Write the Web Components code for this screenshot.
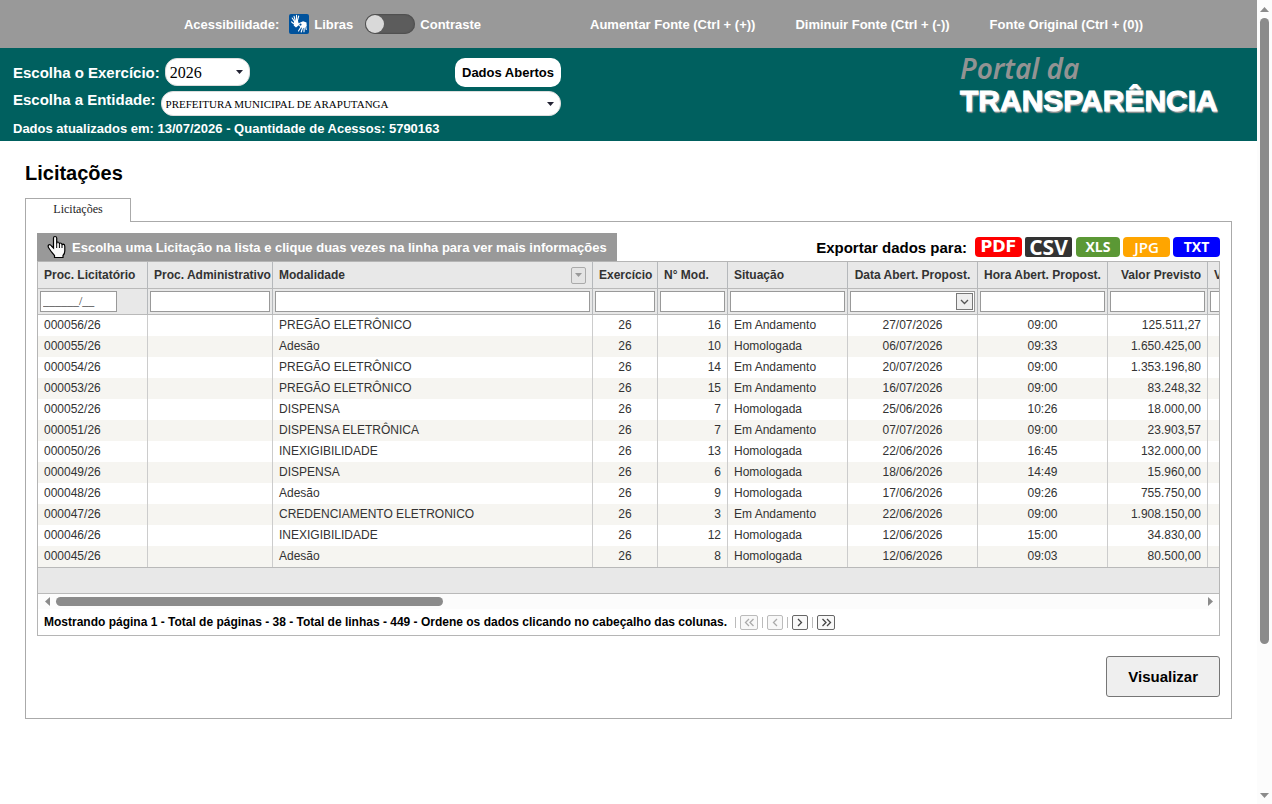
<!DOCTYPE html>
<html lang="pt-BR">
<head>
<meta charset="utf-8">
<title>Portal da Transparência - Licitações</title>
<style>
  body { margin: 0; background: #fff; color: #000; font-family: "Liberation Sans", Arial, sans-serif; font-size: 13px; }
</style>
</head>
<body>
<portal-page>
  <access-bar></access-bar>
  <portal-header></portal-header>
  <tab-panel heading="Licitações" tab="Licitações">
    <grid-toolbar>Escolha uma Licitação na lista e clique duas vezes na linha para ver mais informações</grid-toolbar>
    <data-grid><grid-pager>Mostrando página 1 - Total de páginas - 38 - Total de linhas - 449 - Ordene os dados clicando no cabeçalho das colunas.</grid-pager></data-grid>
    <action-button>Visualizar</action-button>
  </tab-panel>
</portal-page>

<script>
function define(name, html) {
  const template = document.createElement('template');
  template.innerHTML = '<style>:host,*{box-sizing:border-box}button,input,select{font:inherit;color:inherit;margin:0}</style>' + html;
  customElements.define(name, class extends HTMLElement {
    constructor() {
      super();
      this.attachShadow({ mode: 'open' }).append(template.content.cloneNode(true));
    }
    connectedCallback() {
      for (const el of this.shadowRoot.querySelectorAll('[data-attr]')) {
        el.textContent = this.getAttribute(el.dataset.attr);
      }
    }
  });
}

/* Page frame: content next to the vertical scroll bar */
define('portal-page', `
<style>
  :host { display: grid; grid-template-columns: minmax(0, 1fr) 15px; height: 100vh; }
  main { overflow: hidden; }
</style>
<main><slot></slot></main>
<scroll-track style="--thumb:626;--rest:142"></scroll-track>`);

define('scroll-track', `
<style>
  :host { display: flex; flex-direction: column; align-items: center; background: #fcfcfc; }
  :host([horizontal]) { flex-direction: row; height: 15px; }
  .end { flex: 0 0 18px; display: flex; align-items: center; justify-content: center; }
  .thumb { flex: var(--thumb) 1 0; width: 9px; border-radius: 5px; background: #8b8b8b; }
  .rest { flex: var(--rest) 1 0; }
  svg { display: block; fill: #8b8b8b; }
  :host([horizontal]) .thumb { width: auto; height: 9px; }
  :host([horizontal]) svg { transform: rotate(-90deg); }
</style>
<span class="end"><svg width="9" height="5"><path d="M0 5 4.500 0 9 5z"/></svg></span>
<span class="thumb"></span><span class="rest"></span>
<span class="end"><svg width="9" height="5"><path d="M0 0 4.500 5 9 0z"/></svg></span>`);

define('access-bar', `
<style>
  :host { display: flex; align-items: center; justify-content: center; height: 48px; padding-left: 70px; background: #999; color: #fff; font-weight: bold; white-space: nowrap; }
  .left { display: flex; align-items: center; margin-right: 109px; }
  .libras { display: flex; align-items: center; gap: 5px; margin: 0 12px 0 10px; }
  a { color: inherit; text-decoration: none; }
  svg { display: block; }
  label { display: flex; align-items: center; gap: 5px; }
  input { appearance: none; width: 50px; height: 20px; border-radius: 10px; background: #5c5c5c; box-shadow: inset 0 0 2px #333; display: flex; }
  input::before { content: ""; width: 18px; height: 18px; margin: 1px; border-radius: 50%; background: #d9d9d9; }
  nav { display: flex; gap: 40px; }
</style>
<div class="left">
  <span>Acessibilidade:</span>
  <a class="libras" href="#libras">
    <svg width="20" height="20" viewBox="0 0 20 20"><rect width="20" height="20" rx="2" fill="#00529c"/>
      <g stroke="#fff" stroke-linecap="round" fill="none" stroke-width="1.100">
        <path d="M6.200 8.500 3.200 4M6.500 7.500 5 2.200M7.500 7 7.500 1.300M8.300 7 9.700 2M4.500 9.500 2.500 7.800M12.500 12 9.500 17M14 12.500 12.200 18M15.300 12 15 17.700M16.500 11 17.200 15.500"/></g>
      <path d="M5 7.500 8.800 6l.8 3.200 4.500-2 3.400 1.300.2 3.500-2.500 2-3.600-.6-1.800-2.100-2.800 2.200-2.300-2z" fill="#fff"/>
      <circle cx="11.500" cy="10.600" r="1.100" fill="#00529c"/>
    </svg>Libras</a>
  <label><input type="checkbox">Contraste</label>
</div>
<nav><a href="#maior">Aumentar Fonte (Ctrl + (+))</a><a href="#menor">Diminuir Fonte (Ctrl + (-))</a><a href="#original">Fonte Original (Ctrl + (0))</a></nav>`);

define('portal-header', `
<style>
  :host { display: flex; justify-content: space-between; height: 93px; padding: 10px 39px 0 13px; background: #00605f; color: #fff; font-weight: bold; }
  form { width: 548px; }
  .row { display: flex; align-items: center; gap: 5px; }
  .row + .row { margin-top: 4px; align-items: flex-start; }
  label { font-size: 15px; white-space: nowrap; }
  .pick { display: grid; align-items: center; align-self: flex-start; color: #000; font: 16px "Liberation Serif", "Times New Roman", serif; }
  .pick > * { grid-area: 1 / 1; }
  .pick svg { justify-self: end; margin-right: 7px; pointer-events: none; fill: #223; }
  select { appearance: none; width: 100%; border: 1px solid #ddd; background: #fff; border-radius: 12px; padding: 0 20px 0 4px; }
  .year { width: 85px; } .year select { height: 28px; }
  .entity { flex: 1; font-size: 11px; } .entity select { height: 25px; }
  button { margin-left: auto; width: 106px; height: 29px; padding: 0; border: 0; border-radius: 10px; background: #fff; color: #000; }
  p { margin: 5px 0 0; line-height: 15px; white-space: nowrap; }
  .logo { width: 258px; margin-top: -6px; white-space: nowrap; }
  .logo i { display: block; font: italic 600 28px/32px "Noto Sans", sans-serif; color: #939393; }
  .logo b { display: block; font-size: 30px; line-height: 34px; text-shadow: 1px 1px 2px #aaa, 1px 2px 1px #888; -webkit-text-stroke: 1px #fff; }
</style>
<form>
  <div class="row"><label for="year">Escolha o Exercício:</label>
    <span class="pick year"><select id="year"><option>2026</option></select><svg width="7" height="4"><path d="M0 0h7L3.500 4z"/></svg></span>
    <button type="button">Dados Abertos</button></div>
  <div class="row"><label for="entity">Escolha a Entidade:</label>
    <span class="pick entity"><select id="entity"><option>PREFEITURA MUNICIPAL DE ARAPUTANGA</option></select><svg width="7" height="4"><path d="M0 0h7L3.500 4z"/></svg></span></div>
  <p>Dados atualizados em: 13/07/2026 - Quantidade de Acessos: 5790163</p>
</form>
<div class="logo"><i>Portal da</i><b>TRANSPARÊNCIA</b></div>`);

define('tab-panel', `
<style>
  :host { display: block; padding: 20px 25px 0; }
  h1 { margin: 0 0 13px; font-size: 20px; line-height: 24px; }
  .tab { position: relative; display: block; width: 106px; height: 24px; margin-bottom: -1px; padding: 0 0 2px; border: 1px solid #aaa; border-bottom: 0; background: #fff; font: 12px "Liberation Serif", serif; color: #222; }
  section { border: 1px solid #aaa; padding: 11px 11px 21px; }
</style>
<h1 data-attr="heading"></h1>
<button class="tab" role="tab" aria-selected="true" data-attr="tab"></button>
<section><slot></slot></section>`);

define('grid-toolbar', `
<style>
  :host { display: flex; justify-content: space-between; align-items: center; height: 28px; white-space: nowrap; }
  .hint { display: flex; align-items: center; gap: 6px; width: 580px; height: 28px; padding-left: 10px; background: #999; color: #fff; font-weight: bold; }
  .export { display: flex; align-items: center; gap: 3px; }
  .export b { font-size: 15px; margin-right: 5px; }
  button { width: 47px; height: 20px; padding: 0; border: 0; border-radius: 4px; color: #fff; font: bold 14px/20px "Open Sans", sans-serif; }
  .pdf { background: #f00; font: bold 16px/20px "DejaVu Sans", sans-serif; }
  .csv { background: #333; font-size: 21px; border-radius: 2px; margin-right: 1px; }
  .xls { background: #5b9835; width: 44px; }
  .jpg { background: #ffa500; font-size: 15px; font-weight: 600; } .txt { background: #00f; }
</style>
<div class="hint"><svg width="19" height="24" viewBox="0 0 19 24"><path d="M6.500 13V3Q6.500 1.500 8 1.500T9.700 3V8.500Q9.800 7 11 7T12.400 9Q12.500 8 13.700 8T15 10Q15.200 9.200 16.300 9.200 17.800 9.400 17.800 11.500V16Q17.800 18.500 16 20.500V22.500H7.500V20.500L4.500 17 1.800 13Q.6 11.200 1.600 10 3 9 4.500 11z" fill="#fafafa" stroke="#000" stroke-width="1.200"/><path d="M9.700 8v5M12.400 9v4M15 10v3" stroke="#000" fill="none"/></svg><span><slot></slot></span></div>
<div class="export"><b>Exportar dados para:</b><button class="pdf">PDF</button><button class="csv">CSV</button><button class="xls">XLS</button><button class="jpg">JPG</button><button class="txt">TXT</button></div>`);

const columns = [
  ['Proc. Licitatório', 110], ['Proc. Administrativo', 125], ['Modalidade', 320],
  ['Exercício', 65, 'center'], ['N° Mod.', 70, 'right'], ['Situação', 120],
  ['Data Abert. Propost.', 130, 'center'], ['Hora Abert. Propost.', 130, 'center'],
  ['Valor Previsto', 100, 'right'], ['Valor', 130, 'right']
];
const rows = [
  ['000056/26', '', 'PREGÃO ELETRÔNICO', '26', '16', 'Em Andamento', '27/07/2026', '09:00', '125.511,27', ''],
  ['000055/26', '', 'Adesão', '26', '10', 'Homologada', '06/07/2026', '09:33', '1.650.425,00', ''],
  ['000054/26', '', 'PREGÃO ELETRÔNICO', '26', '14', 'Em Andamento', '20/07/2026', '09:00', '1.353.196,80', ''],
  ['000053/26', '', 'PREGÃO ELETRÔNICO', '26', '15', 'Em Andamento', '16/07/2026', '09:00', '83.248,32', ''],
  ['000052/26', '', 'DISPENSA', '26', '7', 'Homologada', '25/06/2026', '10:26', '18.000,00', ''],
  ['000051/26', '', 'DISPENSA ELETRÔNICA', '26', '7', 'Em Andamento', '07/07/2026', '09:00', '23.903,57', ''],
  ['000050/26', '', 'INEXIGIBILIDADE', '26', '13', 'Homologada', '22/06/2026', '16:45', '132.000,00', ''],
  ['000049/26', '', 'DISPENSA', '26', '6', 'Homologada', '18/06/2026', '14:49', '15.960,00', ''],
  ['000048/26', '', 'Adesão', '26', '9', 'Homologada', '17/06/2026', '09:26', '755.750,00', ''],
  ['000047/26', '', 'CREDENCIAMENTO ELETRONICO', '26', '3', 'Em Andamento', '22/06/2026', '09:00', '1.908.150,00', ''],
  ['000046/26', '', 'INEXIGIBILIDADE', '26', '12', 'Homologada', '12/06/2026', '15:00', '34.830,00', ''],
  ['000045/26', '', 'Adesão', '26', '8', 'Homologada', '12/06/2026', '09:03', '80.500,00', '']
];
const headAlign = i => i === 8 ? 'right' : i === 6 || i === 7 ? 'center' : 'left';
const headCells = columns.map(([name], i) =>
  `<th scope="col" class="${headAlign(i)}">${i === 2
    ? `<span class="with-menu">${name}<button aria-label="Filtrar modalidade"><svg width="7" height="4"><path d="M0 0h7L3.500 4z" fill="#999"/></svg></button></span>`
    : name}</th>`).join('');
const filterCells = columns.map(([name], i) =>
  `<td><span class="field"><input aria-label="Filtrar ${name}"${i === 0 ? ' class="mask" value="______/__"' : ''}>${i === 6
    ? '<button aria-label="Abrir calendário"><svg width="9" height="6"><path d="M1 1 4.500 4.500 8 1" fill="none" stroke="#555" stroke-width="1.300"/></svg></button>' : ''}</span></td>`).join('');
const bodyRows = rows.map(r => '<tr>' + r.map((c, i) => `<td class="${columns[i][2] || 'left'}">${c}</td>`).join('') + '</tr>').join('');

define('data-grid', `
<style>
  :host { display: block; border: 1px solid #b5b5b5; font-size: 12px; color: #333; }
  .view { overflow-x: auto; scrollbar-width: none; }
  table { table-layout: fixed; width: 1300px; border-collapse: separate; border-spacing: 0; }
  th, td { padding: 0 6px; border-right: 1px solid #ccc; white-space: nowrap; overflow: hidden; }
  .left { text-align: left; } .center { text-align: center; } .right { text-align: right; }
  thead th, thead td { background: #e8e8e8; border-right-color: #b5b8bb; border-bottom: 1px solid #b9b9b9; }
  thead th { height: 27px; padding-right: 0; }
  thead th.center { padding: 0; } thead th.right { padding-right: 6px; }
  thead td { height: 26px; padding: 0 2px; }
  tbody td { height: 21px; padding-bottom: 2px; }
  tbody tr:nth-child(even) { background: #f6f5f1; }
  .with-menu { display: flex; justify-content: space-between; align-items: center; padding-right: 6px; }
  .with-menu button { width: 15px; height: 17px; padding: 0; border: 1px solid #aaa; border-radius: 2px; background: #e4e4e4; display: grid; place-items: center; }
  .field { display: grid; align-items: center; }
  .field > * { grid-area: 1 / 1; }
  .field input { width: 100%; height: 21px; border: 1px solid #999; padding: 0 2px; background: #fff; font: 12px "Liberation Serif", serif; }
  .field input.mask { width: 77px; }
  .field button { justify-self: end; width: 17px; height: 17px; margin-right: 2px; padding: 0; border: 1px solid #777; background: #eee; display: grid; place-items: center; }
  .foot { height: 27px; background: #e8e8e8; border: solid #b9b9b9; border-width: 1px 0; }
</style>
<div class="view"><table><colgroup>${columns.map(c => `<col style="width:${c[1]}px">`).join('')}</colgroup>
<thead><tr>${headCells}</tr><tr>${filterCells}</tr></thead><tbody>${bodyRows}</tbody></table></div>
<div class="foot"></div>
<scroll-track horizontal style="--thumb:387;--rest:759"></scroll-track>
<slot></slot>`);

define('grid-pager', `
<style>
  :host { display: flex; align-items: center; gap: 4px; height: 26px; padding-left: 6px; color: #000; font-weight: bold; white-space: nowrap; }
  .text { margin-right: 4px; }
  i { width: 1px; height: 11px; background: #bbb; }
  button { width: 16px; height: 15px; padding: 0; border: 1px solid #666; border-radius: 2px; background: #f8f8f8; display: grid; place-items: center; }
  button.wide { width: 18px; }
  button:disabled { border-color: #bbb; }
  svg { fill: none; stroke: #444; stroke-width: 1.300; }
  button:disabled svg { stroke: #aaa; }
</style>
<span class="text"><slot></slot></span>
<i></i><button class="wide" disabled aria-label="Primeira página"><svg width="11" height="9"><path d="M5 1 1.500 4.500 5 8M9.500 1 6 4.500 9.500 8"/></svg></button>
<i></i><button disabled aria-label="Página anterior"><svg width="6" height="9"><path d="M5 1 1.500 4.500 5 8"/></svg></button>
<i></i><button aria-label="Próxima página"><svg width="6" height="9"><path d="M1 1 4.500 4.500 1 8"/></svg></button>
<i></i><button class="wide" aria-label="Última página"><svg width="11" height="9"><path d="M1.500 1 5 4.500 1.500 8M6 1 9.500 4.500 6 8"/></svg></button>`);

define('action-button', `
<style>
  :host { display: flex; justify-content: flex-end; margin-top: 20px; }
  button { height: 41px; padding: 0 21px; border: 1px solid #767676; border-radius: 3px; background: #efefef; font-size: 15px; font-weight: bold; color: #000; }
</style>
<button type="button"><slot></slot></button>`);
</script>
</body>
</html>
